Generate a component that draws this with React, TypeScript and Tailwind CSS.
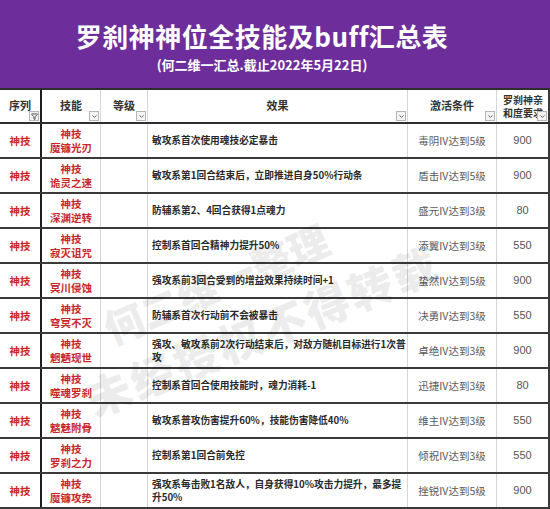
import { ChevronDown, Filter } from "lucide-react"

const font = { fontFamily: '"Noto Sans CJK SC", "Noto Sans", sans-serif' }

const rows = [
  { name: "魔镰光刃", effect: ["敏攻系首次使用魂技必定暴击"], cond: "毒阴IV达到5级", req: "900" },
  { name: "诡灵之速", effect: ["敏攻系第1回合结束后，立即推进自身50%行动条"], cond: "盾击IV达到5级", req: "900" },
  { name: "深渊逆转", effect: ["防辅系第2、4回合获得1点魂力"], cond: "盛元IV达到3级", req: "80" },
  { name: "寂灭诅咒", effect: ["控制系首回合精神力提升50%"], cond: "添翼IV达到3级", req: "550" },
  { name: "冥川侵蚀", effect: ["强攻系前3回合受到的增益效果持续时间+1"], cond: "蛰然IV达到5级", req: "900" },
  { name: "穹冥不灭", effect: ["防辅系首次行动前不会被暴击"], cond: "决勇IV达到3级", req: "550" },
  { name: "魍魉现世", effect: ["强攻、敏攻系前2次行动结束后，对敌方随机目标进行1次普", "攻"], cond: "卓绝IV达到3级", req: "900" },
  { name: "噬魂罗刹", effect: ["控制系首回合使用技能时，魂力消耗-1"], cond: "迅捷IV达到3级", req: "80" },
  { name: "魑魅附骨", effect: ["敏攻系普攻伤害提升60%，技能伤害降低40%"], cond: "维主IV达到3级", req: "550" },
  { name: "罗刹之力", effect: ["控制系第1回合前免控"], cond: "倾祝IV达到3级", req: "550" },
  { name: "魔镰攻势", effect: ["强攻系每击败1名敌人，自身获得10%攻击力提升，最多提", "升50%"], cond: "挫锐IV达到5级", req: "900" },
]

const cols = "grid grid-cols-[42px_59px_47px_260px_89px_1fr]"

function DropBtn({ funnel = false }: { funnel?: boolean }) {
  return (
    <span className="absolute bottom-[1px] right-[1px] flex h-[10px] w-[10px] items-center justify-center border border-[#b5b5b5] bg-[#f4f4f4]">
      {funnel ? (
        <Filter className="h-[7px] w-[7px] text-[#444]" strokeWidth={3} />
      ) : (
        <ChevronDown className="h-[7px] w-[7px] text-[#555]" strokeWidth={3} />
      )}
    </span>
  )
}

export default function App() {
  return (
    <div className="relative h-[509px] w-[550px] overflow-hidden bg-white" style={font}>
      {/* title band */}
      <div className="flex h-[88px] flex-col items-center justify-center bg-[#6d2e9b] pr-[26px] text-white">
        <div className="mt-[4px] text-[26px] font-semibold leading-[34px] tracking-[0.5px]">
          罗刹神神位全技能及buff汇总表
        </div>
        <div className="mt-[3px] text-[13px] font-semibold leading-[18px]">
          (何二维一汇总.截止2022年5月22日)
        </div>
      </div>

      {/* header */}
      <div className={`${cols} h-[36px] border-y-2 border-[#2e2e2e] text-[11px] font-bold text-[#333]`}>
        <div className="relative flex items-center justify-center border-r-2 border-[#1e1e1e] pb-[2px]">
          序列
          <DropBtn funnel />
        </div>
        <div className="relative flex items-center justify-center border-r border-[#d6d6d6] pb-[2px]">
          技能
          <DropBtn />
        </div>
        <div className="relative flex items-center justify-center border-r border-[#d6d6d6] pb-[2px]">
          等级
          <DropBtn />
        </div>
        <div className="relative flex items-center justify-center border-r border-[#d6d6d6] pb-[2px]">
          效果
          <DropBtn />
        </div>
        <div className="relative flex items-center justify-center border-r border-[#d6d6d6] pb-[2px]">
          激活条件
          <DropBtn />
        </div>
        <div className="relative flex flex-col justify-center border-r-2 border-[#3a3a3a] pl-[6px] text-[10px] leading-[13px]">
          <span>罗刹神亲</span>
          <span>和度要求</span>
          <DropBtn />
        </div>
      </div>

      {/* body */}
      {rows.map((r) => (
        <div key={r.name} className={`${cols} h-[35px] border-b-2 border-[#3a3a3a]`}>
          <div className="flex items-center justify-center border-r-2 border-[#1e1e1e] text-[10.5px] font-bold text-[#c9262b]">
            神技
          </div>
          <div className="flex flex-col items-center justify-center border-r border-[#d6d6d6] text-[10.5px] font-semibold leading-[14px] text-[#c9262b]">
            <span>神技</span>
            <span>{r.name}</span>
          </div>
          <div className="border-r border-[#d6d6d6]" />
          <div className="flex flex-col justify-center whitespace-nowrap border-r border-[#d6d6d6] pl-[4px] text-[9.7px] font-bold leading-[13px] text-[#2a2a2a]">
            {r.effect.map((l) => (
              <span key={l}>{l}</span>
            ))}
          </div>
          <div className="flex items-center justify-center border-r border-[#d6d6d6] text-[10.5px] text-[#5a5a5a]">
            {r.cond}
          </div>
          <div className="flex items-center justify-center border-r-2 border-[#3a3a3a] text-[11px] text-[#555]" style={{ fontFamily: '"Liberation Sans", sans-serif' }}>
            {r.req}
          </div>
        </div>
      ))}

      {/* watermark */}
      <span className="pointer-events-none absolute left-[105px] top-[305px] origin-[0_50%] -rotate-[23deg] whitespace-nowrap text-[40px] font-black leading-[50px] text-black opacity-[0.07]">
        何二维一整理
      </span>
      <span className="pointer-events-none absolute left-[88px] top-[375px] origin-[0_50%] -rotate-[22deg] whitespace-nowrap text-[44px] font-black leading-[50px] tracking-[3px] text-black opacity-[0.07]">
        未经授权不得转载
      </span>
    </div>
  )
}
